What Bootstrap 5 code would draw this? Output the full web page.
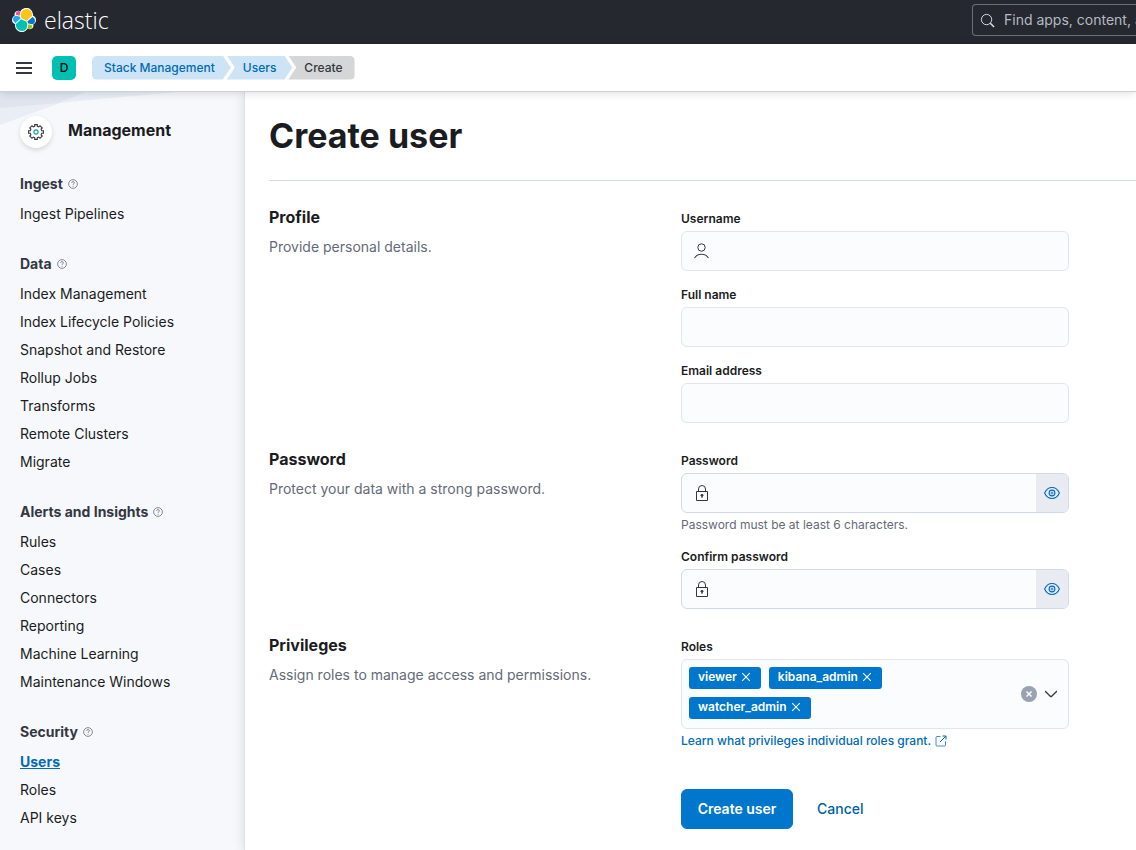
<!DOCTYPE html>
<html lang="en">
<head>
<meta charset="utf-8">
<meta name="viewport" content="width=device-width, initial-scale=1">
<title>Create user - Elastic</title>
<link href="https://cdn.jsdelivr.net/npm/bootstrap@5.3.0/dist/css/bootstrap.min.css" rel="stylesheet">
<script src="https://cdn.jsdelivr.net/npm/bootstrap@5.3.0/dist/js/bootstrap.bundle.min.js" defer></script>
<style>
  :root { --ink: #1a1c21; --text: #343741; --subdued: #646a77; --link: #006bb8; --primary: #0077cc; --line: #d3dae6; --field: #fbfcfd; --field-line: #e2e5ef; }
  body { font-family: Inter, "Liberation Sans", sans-serif; font-size: 14px; line-height: 20px; color: var(--text); background: #fff; }
  svg { display: block; flex: none; }
  a { color: var(--link); text-decoration: none; }

  .topbar { height: 44px; background: #25282f; padding: 0 0 4px 12px; }
  .brand { gap: 8px; color: #fff; font: 300 23px/28px "Open Sans", "Noto Sans", sans-serif; }
  .search-box { width: 164px; height: 32px; padding-left: 7px; gap: 9px; border: 1px solid #69707d; border-right: 0; border-radius: 4px 0 0 4px; color: #dfe5ef; }
  .search-box input { color: #dfe5ef; }
  .search-box input::placeholder { color: #b4b9c3; opacity: 1; }
  .bare { border: 0; background: none; padding: 0; outline: 0; min-width: 0; }

  .crumbbar { height: 48px; padding: 0 16px; border-bottom: 1px solid #cbd1db; box-shadow: 0 1px 8px rgba(0,0,0,.14); z-index: 2; background: #fff; }
  .space-btn { width: 24px; height: 24px; margin: 0 16px 0 20px; border-radius: 5px; background: #00bfb3; color: #000; font-size: 12px; font-weight: 500; }
  .crumbs { font-size: 12px; font-weight: 500; line-height: 24px; list-style: none; }
  .crumbs li { padding: 0 16px; margin-left: -4px; background: #cce4f5; clip-path: polygon(0 0, calc(100% - 8px) 0, 100% 50%, calc(100% - 8px) 100%, 0 100%, 8px 50%); }
  .crumbs li:first-child { margin-left: 0; padding-left: 12px; border-radius: 5px 0 0 5px; clip-path: polygon(0 0, calc(100% - 8px) 0, 100% 50%, calc(100% - 8px) 100%, 0 100%); }
  .crumbs li:last-child { padding-right: 12px; border-radius: 0 5px 5px 0; background: #d5d6d8; clip-path: polygon(0 0, 100% 0, 100% 100%, 0 100%, 8px 50%); }

  .shell { min-height: calc(100vh - 92px); }
  .side { width: 244px; flex: none; padding: 24px 20px 16px; background: #f7f8fc; }
  .side-art { position: absolute; top: 0; left: 0; }
  .gear { width: 32px; height: 32px; border-radius: 50%; background: #fff; box-shadow: 0 2px 5px rgba(0,0,0,.14); }
  .side-title { font-size: 16px; font-weight: 700; line-height: 28px; color: var(--ink); }
  .side h3 { margin: 24px 0 4px; font-size: 14px; font-weight: 700; line-height: 24px; gap: 5px; color: var(--text); }
  .side h3 svg { color: #69707d; }
  .side ul { list-style: none; line-height: 28px; }
  .side ul a { color: var(--ink); }
  .side ul a.active { color: var(--link); font-weight: 700; text-decoration: underline; }

  .page { z-index: 1; padding: 24px 0 16px 24px; background: #fff; border-left: 1px solid #dde1ea; box-shadow: 0 0 12px rgba(0,0,0,.13); }
  .page h1 { font-size: 34px; font-weight: 700; line-height: 40px; color: var(--ink); padding-bottom: 24px; border-bottom: 1px solid var(--line); margin-bottom: 24px; }
  .sections { max-width: 800px; margin-right: 24px; }
  .section-row { --bs-gutter-x: 24px; }
  .section-row h2 { font-size: 16px; font-weight: 700; line-height: 24px; margin-bottom: 8px; color: var(--ink); }
  .section-row p { color: var(--subdued); }
  .fields { padding-top: 6px; }
  .fields label { font-size: 12px; font-weight: 600; line-height: 16px; color: var(--ink); margin-bottom: 4px; display: block; }
  .field { min-height: 40px; border: 1px solid var(--field-line); border-radius: 6px; background: var(--field); overflow: hidden; }
  .field input { min-height: 38px; padding: 0 12px; }
  .field > svg { margin-left: 12px; }
  .secret { border-color: var(--line); }
  .eye-btn { width: 32px; background: #e9ebf3; color: var(--link); }
  .hint { font-size: 12px; line-height: 16px; margin-top: 4px; color: var(--subdued); }
  .hint a { gap: 4px; }
  .roles { min-height: 70px; padding: 7px 13px 7px 7px; }
  .role-list { gap: 8px; padding-right: 12px; }
  .role-list input { min-height: 22px; width: 60px; padding: 0; }
  .pill { height: 22px; padding: 0 9px 2px; gap: 3px; border-radius: 3px; background: var(--primary); color: #fff; font-size: 12px; font-weight: 600; line-height: 20px; }
  .clear-btn { width: 16px; height: 16px; border-radius: 50%; background: #98a2b3; color: #fff; }
  .actions { margin-top: 40px; gap: 16px; }
  .actions .btn { height: 40px; font-size: 14px; line-height: 20px; border-radius: 6px; padding: 0 7px; font-weight: 500; }
  .actions .btn-primary { width: 112px; --bs-btn-bg: #0077cc; --bs-btn-border-color: #0077cc; font-weight: 600; }
  .actions .btn-link { color: #0061a6; text-decoration: none; }
</style>
</head>
<body>
<svg class="d-none" aria-hidden="true">
  <symbol id="i-help" viewBox="0 0 16 16"><circle cx="8" cy="8" r="7" fill="none" stroke="currentColor" stroke-width="1.3"/><path d="M5.8 6.2c0-1.4 1-2.1 2.2-2.1s2.2.8 2.2 2c0 1.5-2.1 1.6-2.1 3.3M8.1 11v1.4" fill="none" stroke="currentColor" stroke-width="1.3"/></symbol>
  <symbol id="i-lock" viewBox="0 0 16 16"><path d="M2.5 6.5h11v9h-11zM4.5 6.500V4a3.500 3.500 0 0 1 7 0v2.500" fill="none" stroke="currentColor" stroke-linejoin="round"/><circle cx="8" cy="10.300" r="1.400" fill="currentColor"/><path d="M7.500 10.500h1V13h-1z" fill="currentColor"/></symbol>
  <symbol id="i-eye" viewBox="0 0 16 16"><path d="M.6 8C2.300 4.200 4.900 2.500 8 2.500S13.700 4.200 15.400 8c-1.700 3.800-4.300 5.500-7.400 5.500S2.300 11.800.6 8z" fill="none" stroke="currentColor" stroke-width="1.100"/><circle cx="8" cy="8" r="2.900" fill="none" stroke="currentColor" stroke-width="1.100"/><circle cx="8" cy="8" r="1" fill="none" stroke="currentColor" stroke-width=".8"/></symbol>
  <symbol id="i-cross" viewBox="0 0 12 12"><path d="M2.200 2.200l7.600 7.600M9.800 2.200l-7.600 7.600" fill="none" stroke="currentColor" stroke-width="1.100"/></symbol>
</svg>

<header class="topbar d-flex align-items-center">
  <a class="brand d-flex align-items-center" href="#">
    <svg width="24" height="24" viewBox="0 0 32 32">
      <path fill="#fff" d="M32 16.770a6.334 6.334 0 0 0-1.140-3.630 6.269 6.269 0 0 0-3.020-2.300 9.100 9.100 0 0 0-3.870-9.118 9.020 9.020 0 0 0-9.820.06 9.080 9.080 0 0 0-3.040 3.470 4.820 4.820 0 0 0-5.805-.05 4.870 4.870 0 0 0-1.620 5.640A6.399 6.399 0 0 0 1.180 13.200 6.299 6.299 0 0 0 0 16.790a6.330 6.330 0 0 0 1.150 3.642 6.319 6.319 0 0 0 3.044 2.307 9.019 9.019 0 0 0 .83 5.958 8.970 8.970 0 0 0 4.380 4.106 8.930 8.930 0 0 0 10.464-2.763c.37-.42.690-.880.960-1.370a4.780 4.780 0 0 0 5.775.035 4.830 4.830 0 0 0 1.610-5.560 6.410 6.410 0 0 0 2.610-2.330A6.370 6.370 0 0 0 32 16.770" transform="translate(0 -.4) scale(1 .97)"/>
      <path fill="#FEC514" d="M12.580 13.790l7.002 3.210 7.066-6.210a7.850 7.850 0 0 0 .152-1.557c0-4.287-3.464-7.763-7.738-7.763a7.740 7.740 0 0 0-6.380 3.380l-1.180 6.110z"/>
      <path fill="#00BFB3" d="M5.333 21.228a7.964 7.964 0 0 0-.15 1.590c0 4.300 3.476 7.786 7.763 7.786a7.760 7.760 0 0 0 6.430-3.410l1.166-6.090-1.556-2.984-7.028-3.212z"/>
      <path fill="#F04E98" d="M5.290 9.100l4.800 1.137 1.050-5.470a3.780 3.780 0 0 0-5.850 4.333"/>
      <path fill="#1BA9F5" d="M4.873 10.244c-2.088.692-3.546 2.705-3.546 4.910a5.180 5.180 0 0 0 3.320 4.830l6.734-6.100-1.236-2.650z"/>
      <path fill="#93C90E" d="M20.873 27.189a3.737 3.737 0 0 0 2.285.784 3.783 3.783 0 0 0 3.560-5.110l-4.798-1.125z"/>
      <path fill="#07C" d="M21.848 20.563l5.280 1.236c2.090-.690 3.545-2.703 3.545-4.910a5.170 5.170 0 0 0-3.325-4.820l-6.905 6.060z"/>
    </svg>
    <span>elastic</span>
  </a>
  <div class="search-box d-flex align-items-center ms-auto">
    <svg width="15" height="15" viewBox="0 0 16 16"><circle cx="7" cy="7" r="5.500" fill="none" stroke="currentColor"/><path d="M11 11l4 4" stroke="currentColor" stroke-width="1.500"/></svg>
    <input class="bare flex-fill" type="text" aria-label="Search" placeholder="Find apps, content, and more.">
  </div>
</header>

<div class="crumbbar d-flex align-items-center position-relative">
  <button class="bare" type="button" aria-label="Toggle navigation"><svg width="16" height="16" viewBox="0 0 16 16"><path d="M0 2h16v2H0zM0 7h16v2H0zM0 12h16v2H0z" fill="#343741"/></svg></button>
  <button class="bare space-btn" type="button">D</button>
  <nav aria-label="Breadcrumb">
    <ol class="crumbs d-flex m-0 p-0">
      <li><a href="#">Stack Management</a></li>
      <li><a href="#">Users</a></li>
      <li aria-current="page">Create</li>
    </ol>
  </nav>
</div>

<div class="shell d-flex">
  <nav class="side position-relative" aria-label="Management">
    <svg class="side-art" width="180" height="34" viewBox="0 0 180 34"><path d="M0 0h178L98 7 60 11 0 33z" fill="#e9edf5"/><path d="M0 0h86L58 11 0 16z" fill="#dfe4ef"/></svg>
    <div class="d-flex position-relative gap-3">
      <span class="gear d-flex align-items-center justify-content-center">
        <svg width="16" height="16" viewBox="0 0 16 16" fill="none"><path d="M6.700.6h2.600v1.700l1.500.6L12 1.700 14.300 4l-1.200 1.200.6 1.500h1.700v2.600h-1.700l-.6 1.500 1.200 1.200-2.300 2.300-1.200-1.200-1.500.6v1.700H6.700v-1.700l-1.500-.6L4 14.300 1.700 12l1.200-1.200-.6-1.500H.6V6.700h1.700l.6-1.500L1.700 4 4 1.700l1.200 1.200 1.500-.6z" stroke="#343741" stroke-width="1.100"/><circle cx="8" cy="8" r="2.100" stroke="#00a69b" stroke-width="1.100"/></svg>
      </span>
      <div class="side-title">Management</div>
    </div>

    <h3 class="d-flex align-items-center">Ingest <svg width="10" height="10"><use href="#i-help"/></svg></h3>
    <ul class="m-0 p-0">
      <li><a href="#">Ingest Pipelines</a></li>
    </ul>
    <h3 class="d-flex align-items-center">Data <svg width="10" height="10"><use href="#i-help"/></svg></h3>
    <ul class="m-0 p-0">
      <li><a href="#">Index Management</a></li>
      <li><a href="#">Index Lifecycle Policies</a></li>
      <li><a href="#">Snapshot and Restore</a></li>
      <li><a href="#">Rollup Jobs</a></li>
      <li><a href="#">Transforms</a></li>
      <li><a href="#">Remote Clusters</a></li>
      <li><a href="#">Migrate</a></li>
    </ul>
    <h3 class="d-flex align-items-center">Alerts and Insights <svg width="10" height="10"><use href="#i-help"/></svg></h3>
    <ul class="m-0 p-0">
      <li><a href="#">Rules</a></li>
      <li><a href="#">Cases</a></li>
      <li><a href="#">Connectors</a></li>
      <li><a href="#">Reporting</a></li>
      <li><a href="#">Machine Learning</a></li>
      <li><a href="#">Maintenance Windows</a></li>
    </ul>
    <h3 class="d-flex align-items-center">Security <svg width="10" height="10"><use href="#i-help"/></svg></h3>
    <ul class="m-0 p-0">
      <li><a class="active" href="#">Users</a></li>
      <li><a href="#">Roles</a></li>
      <li><a href="#">API keys</a></li>
    </ul>
  </nav>

  <main class="page position-relative flex-fill">
    <h1>Create user</h1>
    <form class="sections d-flex flex-column gap-4">
      <section class="row section-row">
        <div class="col-6">
          <h2>Profile</h2>
          <p class="m-0">Provide personal details.</p>
        </div>
        <div class="col-6 fields d-flex flex-column gap-3">
          <div>
            <label for="username">Username</label>
            <div class="field d-flex align-items-center">
              <svg width="16" height="16" viewBox="0 0 16 16" fill="none" stroke="#343741"><circle cx="7.500" cy="4.500" r="3.700"/><path d="M.5 15c1.500-2.300 4-3.700 7-3.700s5.500 1.400 7 3.700" stroke-width="1.100"/></svg>
              <input class="bare flex-fill" id="username" type="text">
            </div>
          </div>
          <div>
            <label for="fullname">Full name</label>
            <div class="field d-flex"><input class="bare flex-fill" id="fullname" type="text"></div>
          </div>
          <div>
            <label for="email">Email address</label>
            <div class="field d-flex"><input class="bare flex-fill" id="email" type="email"></div>
          </div>
        </div>
      </section>

      <section class="row section-row">
        <div class="col-6">
          <h2>Password</h2>
          <p class="m-0">Protect your data with a strong password.</p>
        </div>
        <div class="col-6 fields d-flex flex-column gap-3">
          <div>
            <label for="password">Password</label>
            <div class="field secret d-flex align-items-center">
              <svg width="16" height="16"><use href="#i-lock"/></svg>
              <input class="bare flex-fill" id="password" type="password">
              <button class="bare eye-btn align-self-stretch d-flex align-items-center justify-content-center" type="button" aria-label="Show password"><svg width="16" height="16"><use href="#i-eye"/></svg></button>
            </div>
            <div class="hint">Password must be at least 6 characters.</div>
          </div>
          <div>
            <label for="confirm">Confirm password</label>
            <div class="field secret d-flex align-items-center">
              <svg width="16" height="16"><use href="#i-lock"/></svg>
              <input class="bare flex-fill" id="confirm" type="password">
              <button class="bare eye-btn align-self-stretch d-flex align-items-center justify-content-center" type="button" aria-label="Show password"><svg width="16" height="16"><use href="#i-eye"/></svg></button>
            </div>
          </div>
        </div>
      </section>

      <section class="row section-row">
        <div class="col-6">
          <h2>Privileges</h2>
          <p class="m-0">Assign roles to manage access and permissions.</p>
        </div>
        <div class="col-6 fields">
          <label for="roles">Roles</label>
          <div class="field roles d-flex align-items-center gap-2">
            <div class="role-list d-flex flex-wrap flex-fill align-self-start">
              <span class="pill d-flex align-items-center">viewer <button class="bare text-white" type="button" aria-label="Remove viewer"><svg width="12" height="12"><use href="#i-cross"/></svg></button></span>
              <span class="pill d-flex align-items-center">kibana_admin <button class="bare text-white" type="button" aria-label="Remove kibana_admin"><svg width="12" height="12"><use href="#i-cross"/></svg></button></span>
              <span class="pill d-flex align-items-center">watcher_admin <button class="bare text-white" type="button" aria-label="Remove watcher_admin"><svg width="12" height="12"><use href="#i-cross"/></svg></button></span>
              <input class="bare flex-fill" id="roles" type="text">
            </div>
            <button class="bare clear-btn d-flex align-items-center justify-content-center flex-shrink-0" type="button" aria-label="Clear roles"><svg width="8" height="8" viewBox="0 0 8 8"><path d="M1.500 1.500l5 5M6.500 1.500l-5 5" stroke="currentColor" stroke-width="1.500"/></svg></button>
            <button class="bare" type="button" aria-label="Open role list"><svg width="12" height="12" viewBox="0 0 12 12"><path d="M0 3l5.300 5.200a1 1 0 0 0 1.400 0L12 3" fill="none" stroke="#343741" stroke-width="1.300"/></svg></button>
          </div>
          <div class="hint"><a class="d-inline-flex align-items-center fw-medium" href="#">Learn what privileges individual roles grant. <svg width="12" height="12" viewBox="0 0 12 12" fill="none" stroke="currentColor"><path d="M5.500 1.500H2a1 1 0 0 0-1 1V10a1 1 0 0 0 1 1h7.500a1 1 0 0 0 1-1V6.500" opacity=".75"/><path d="M7.500 1H11v3.500M11 1L5 7"/></svg></a></div>
          <div class="actions d-flex">
            <button class="btn btn-primary" type="submit">Create user</button>
            <button class="btn btn-link" type="button">Cancel</button>
          </div>
        </div>
      </section>
    </form>
  </main>
</div>
</body>
</html>
